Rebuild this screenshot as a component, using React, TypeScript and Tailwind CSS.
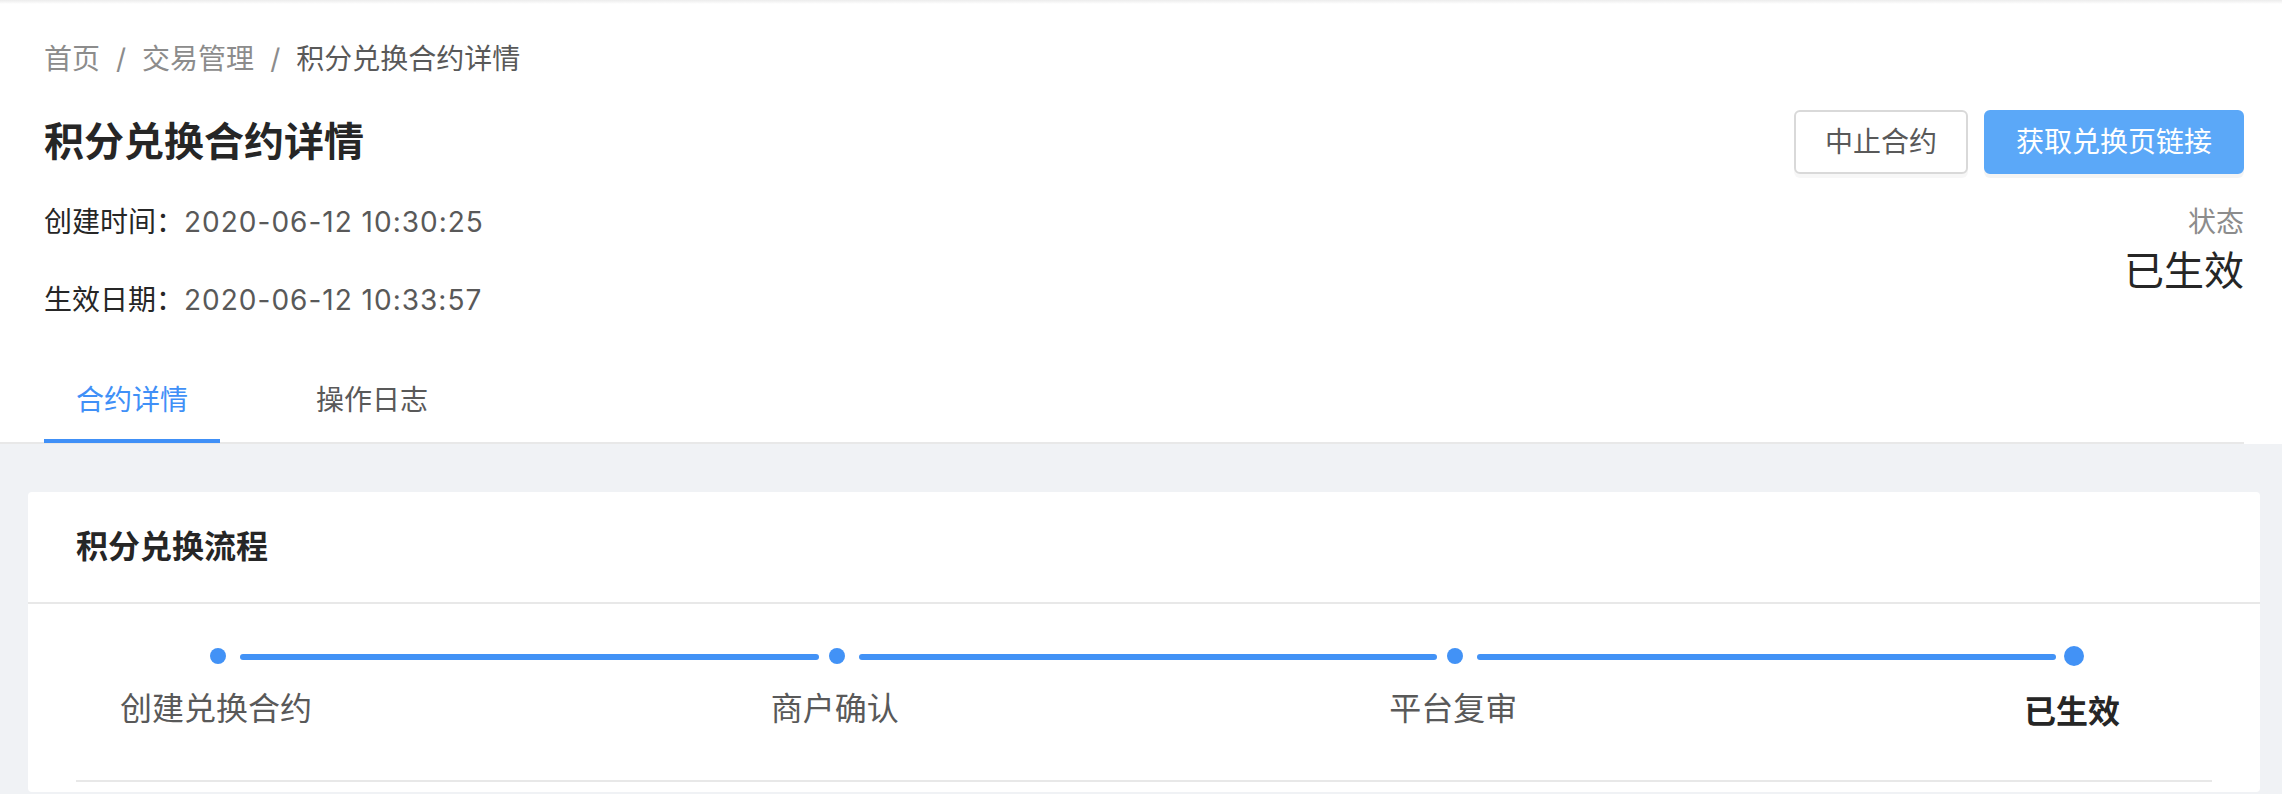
import React from "react";

const steps = ["创建兑换合约", "商户确认", "平台复审", "已生效"];

export default function App() {
  return (
    <div className="min-h-[794px] w-full bg-[#f0f2f5] font-['Inter','Noto_Sans_CJK_SC',sans-serif] text-[#595959]">
      {/* header */}
      <div className="bg-white">
        <div className="h-[4px] bg-linear-to-b from-[#ececec] to-white" />
        <div className="pl-[44px] pr-[38px] pt-[34px]">
          {/* breadcrumb */}
          <div className="flex h-[42px] items-center text-[28px] leading-[42px]">
            <span className="text-[#8c8c8c]">首页</span>
            <span className="mx-[16px] text-[#8c8c8c]">/</span>
            <span className="text-[#8c8c8c]">交易管理</span>
            <span className="mx-[16px] text-[#8c8c8c]">/</span>
            <span className="text-[#595959]">积分兑换合约详情</span>
          </div>

          {/* title row */}
          <div className="mt-[30px] flex h-[64px] items-center justify-between">
            <div className="text-[40px] font-semibold leading-[56px] text-[#262626]">积分兑换合约详情</div>
            <div className="flex items-center gap-4">
              <button className="h-[64px] rounded-[6px] border-2 border-[#d9d9d9] bg-white px-[29px] text-[28px] leading-[42px] text-[#595959] shadow-[0_4px_0_rgba(0,0,0,0.03)]">
                中止合约
              </button>
              <button className="h-[64px] rounded-[6px] border-2 border-[#5ba8f8] bg-[#5ba8f8] px-[30px] text-[28px] leading-[42px] text-white shadow-[0_4px_0_rgba(0,0,0,0.045)]">
                获取兑换页链接
              </button>
            </div>
          </div>

          {/* info row */}
          <div className="mt-[27px] flex justify-between">
            <div className="flex flex-col text-[28px] leading-[42px]">
              <div>
                <span className="text-[#262626]">创建时间：</span>
                <span className="tracking-[1px] text-[#595959]">2020-06-12 10:30:25</span>
              </div>
              <div className="mt-[36px]">
                <span className="text-[#262626]">生效日期：</span>
                <span className="tracking-[1px] text-[#595959]">2020-06-12 10:33:57</span>
              </div>
            </div>
            <div className="flex flex-col items-end">
              <div className="text-[28px] leading-[42px] text-[#8c8c8c]">状态</div>
              <div className="text-[40px] leading-[56px] text-[#262626]">已生效</div>
            </div>
          </div>

          {/* tabs */}
          <div className="-ml-[44px] mt-[34px] flex border-b-2 border-[#e8e8e8] pl-[44px]">
            <div className="relative px-[32px] pb-[21px] pt-[24px] text-[28px] leading-[42px] text-[#4090f7]">
              合约详情
              <div className="absolute bottom-[-1px] left-0 right-0 h-[4px] bg-[#4090f7]" />
            </div>
            <div className="ml-[64px] px-[32px] pb-[21px] pt-[24px] text-[28px] leading-[42px] text-[#595959]">
              操作日志
            </div>
          </div>
        </div>
      </div>

      {/* content */}
      <div className="pl-[28px] pr-[22px] pt-[48px]">
        <div className="rounded-[4px] bg-white">
          <div className="flex h-[112px] items-center border-b-2 border-[#e8e8e8] px-[48px]">
            <div className="text-[32px] font-semibold leading-[48px] text-[#262626]">积分兑换流程</div>
          </div>
          <div className="px-[48px] pt-[44px]">
            <div className="flex w-full">
              {steps.map((s, i) => {
                const last = i === steps.length - 1;
                return (
                  <div key={s} className={last ? "relative w-[280px] flex-none" : "relative flex-1"}>
                    {!last && (
                      <div className="absolute left-[164px] top-[6px] h-[6px] w-[calc(100%-40px)] rounded-full bg-[#4292f6]" />
                    )}
                    {last ? (
                      <div className="-mt-[2px] ml-[132px] h-5 w-5 rounded-full bg-[#4292f6]" />
                    ) : (
                      <div className="ml-[134px] h-4 w-4 rounded-full bg-[#4292f6]" />
                    )}
                    <div
                      className={
                        last
                          ? "mt-[22px] w-[280px] text-center text-[32px] font-semibold leading-[48px] text-[#262626]"
                          : "mt-[21px] w-[280px] text-center text-[32px] leading-[48px] text-[#595959]"
                      }
                    >
                      {s}
                    </div>
                  </div>
                );
              })}
            </div>
            <div className="mt-[44px] h-[2px] bg-[#e8e8e8]" />
            <div className="h-[10px]" />
          </div>
        </div>
      </div>
    </div>
  );
}
